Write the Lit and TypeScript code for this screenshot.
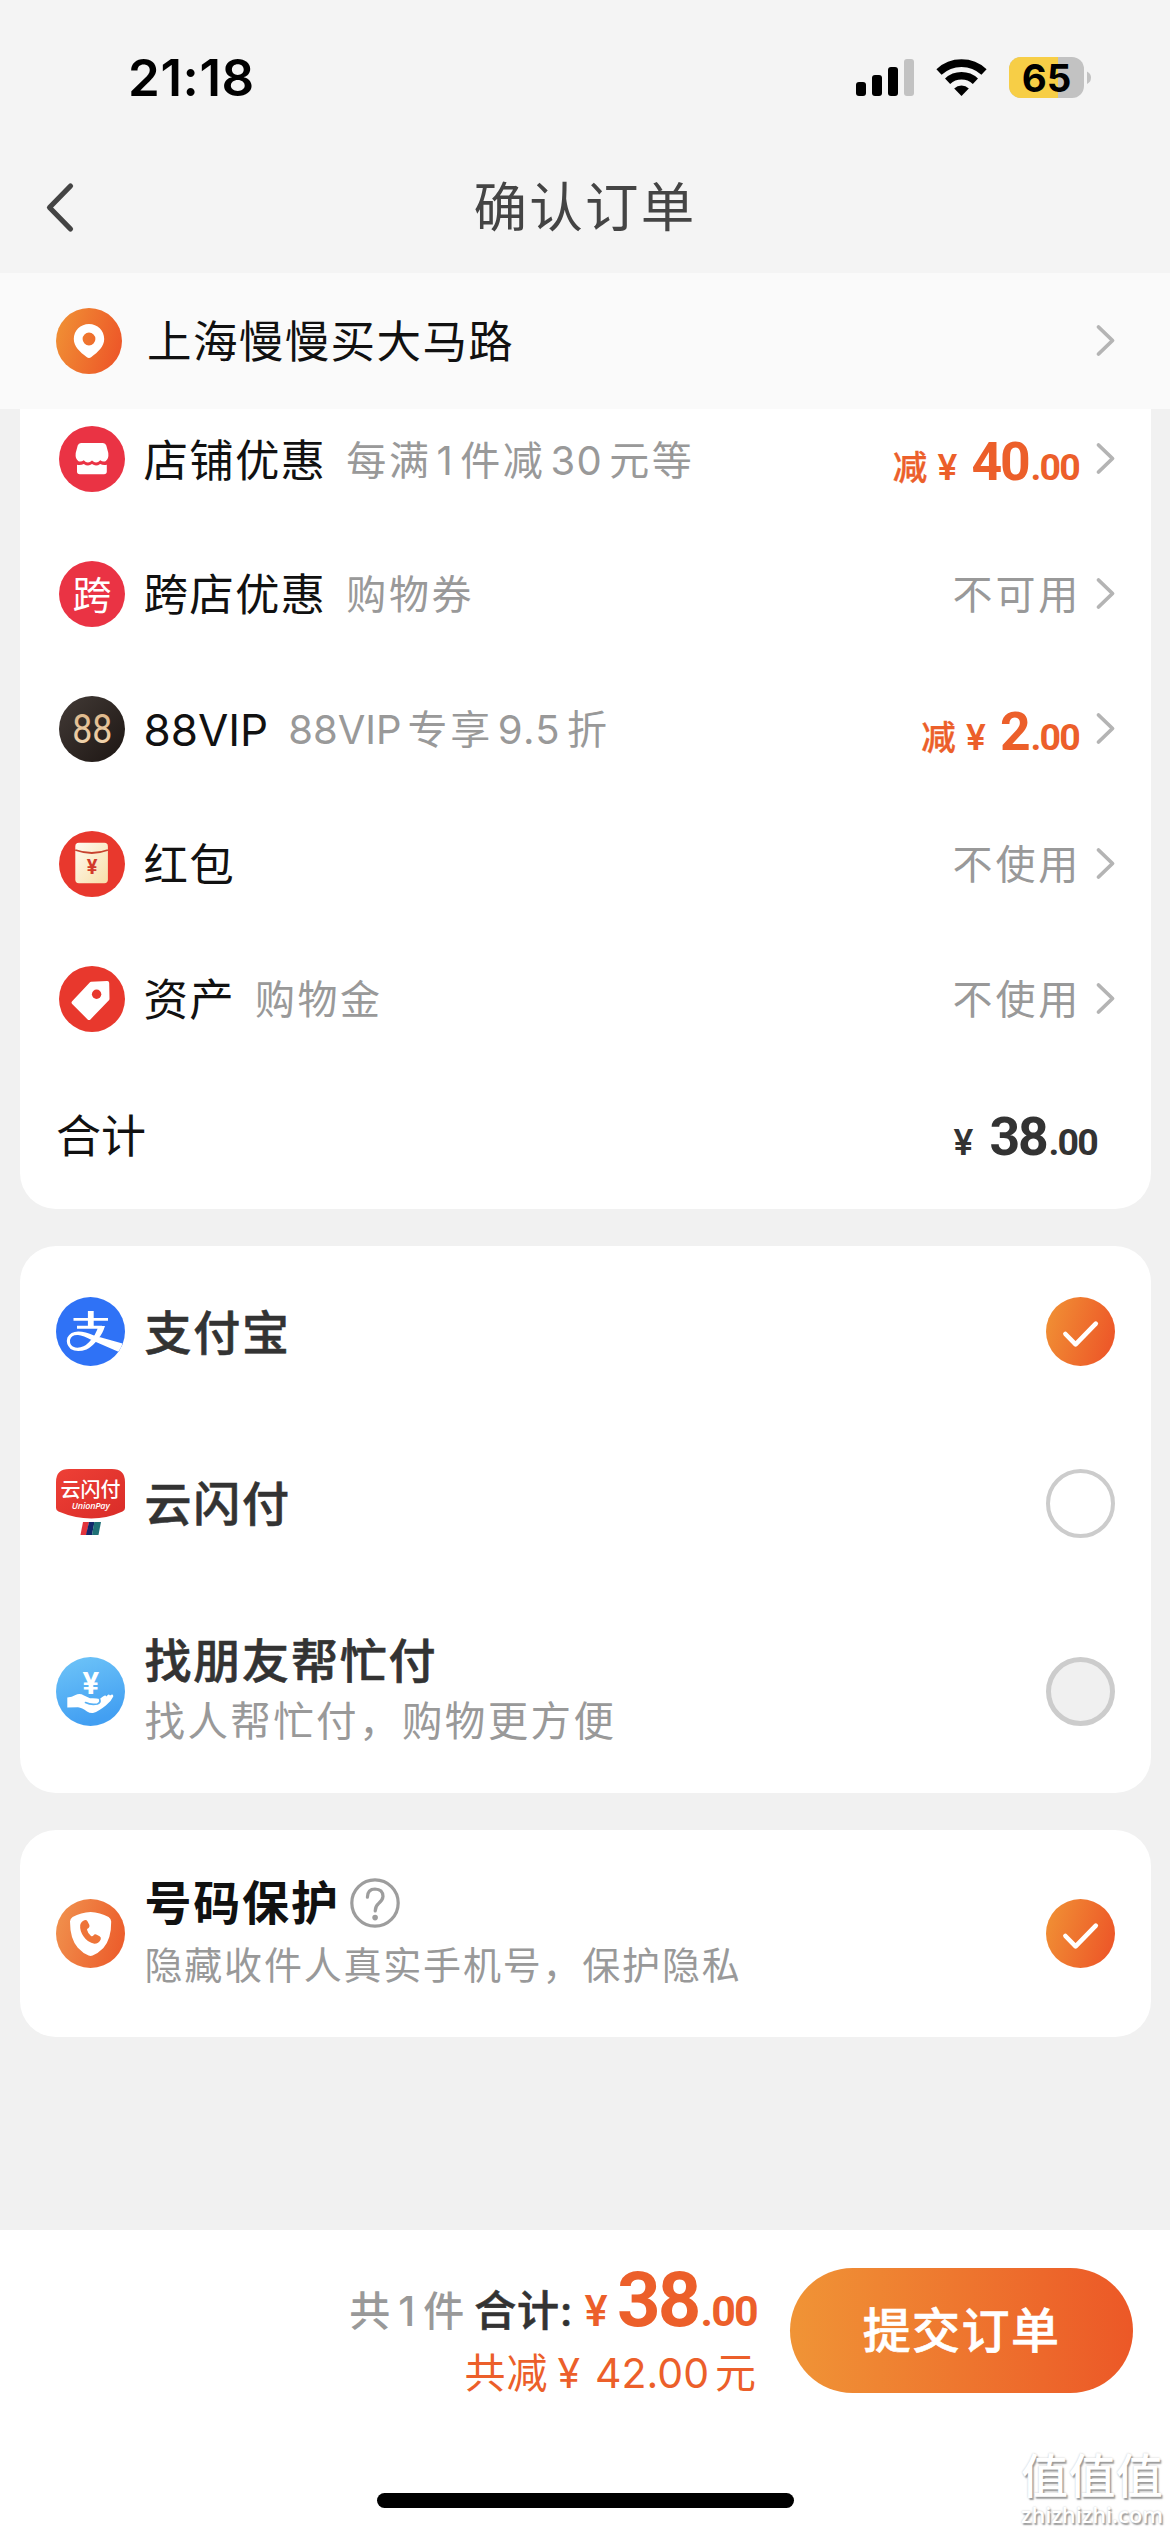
import { LitElement, html, css, svg, nothing, TemplateResult } from "lit";
import { customElement } from "lit/decorators.js";

interface DiscountRow {
  icon: TemplateResult;
  label: string;
  hint?: TemplateResult;
  value?: string;
  off?: [string, string];
}

interface PayRow {
  icon: TemplateResult;
  title: string;
  hint?: string;
  state: "on" | "off" | "disabled";
}

const CJK = "Noto Sans CJK SC";

const orangeFill = (id: string) => svg`
  <linearGradient id=${id} x1="0" y1="0.35" x2="1" y2="0.65">
    <stop offset="0" stop-color="#f08e34"></stop>
    <stop offset="1" stop-color="#ed5628"></stop>
  </linearGradient>`;

const chevron = html`<svg class="chevron" viewBox="0 0 22 36">
  <path d="M3.5 4 L17.5 17.5 L3.5 31" fill="none" stroke="#b4b4b4" stroke-width="3.8" stroke-linecap="round" stroke-linejoin="round"></path>
</svg>`;

const pinIcon = html`<svg class="ico66" viewBox="0 0 66 66">
  <defs>${orangeFill("gpin")}</defs>
  <circle cx="33" cy="33" r="33" fill="url(#gpin)"></circle>
  <path fill="#fff" fill-rule="evenodd" d="M33 16 C24.5 16 17.8 22.6 17.8 31 C17.8 38.5 24 44 30.6 49 Q33 50.8 35.4 49 C42 44 48.2 38.5 48.2 31 C48.2 22.6 41.5 16 33 16 Z M33 24.6 A6.4 6.4 0 1 1 33 37.4 A6.4 6.4 0 1 1 33 24.6 Z"></path>
</svg>`;

const shopIcon = html`<svg class="ico66" viewBox="0 0 66 66">
  <circle cx="33" cy="33" r="33" fill="#ea3344"></circle>
  <path fill="#fff" d="M22 17 H44 Q46.5 17 47.3 19.5 L49.3 27 Q50 33 46.5 35.2 Q43.5 36 41.3 34.2 Q37.3 38.8 33 34.6 Q28.7 38.8 24.7 34.2 Q22.5 36 19.5 35.2 Q16 33 16.7 27 L18.7 19.5 Q19.5 17 22 17 Z"></path>
  <path fill="#fff" d="M18 38.8 Q22 39.6 24.8 37.9 Q29 41 33 38 Q37 41 41.2 37.9 Q44 39.6 47.8 38.8 V45.5 Q47.8 48.3 45 48.3 H20.8 Q18 48.3 18 45.5 Z"></path>
</svg>`;

const crossIcon = html`<svg class="ico66" viewBox="0 0 66 66">
  <circle cx="33" cy="33" r="33" fill="#ea3344"></circle>
  <text x="33" y="47.5" text-anchor="middle" font-family=${CJK} font-size="39" fill="#fff">跨</text>
</svg>`;

const vipIcon = html`<svg class="ico66" viewBox="0 0 66 66">
  <defs>
    <linearGradient id="gvip" x1="0" y1="0" x2="1" y2="1">
      <stop offset="0" stop-color="#423a36"></stop>
      <stop offset="1" stop-color="#1d1613"></stop>
    </linearGradient>
    <linearGradient id="g88" x1="0" y1="0" x2="0" y2="1">
      <stop offset="0" stop-color="#d9b183"></stop>
      <stop offset="1" stop-color="#f6dcb6"></stop>
    </linearGradient>
  </defs>
  <circle cx="33" cy="33" r="33" fill="url(#gvip)"></circle>
  <text x="33.2" y="47" text-anchor="middle" textLength="40" lengthAdjust="spacingAndGlyphs" font-family="Roboto" font-size="41" fill="url(#g88)">88</text>
</svg>`;

const packetIcon = html`<svg class="ico66" viewBox="0 0 66 66">
  <defs>
    <linearGradient id="gpk" x1="0" y1="0" x2="1" y2="1">
      <stop offset="0" stop-color="#fffaf0"></stop>
      <stop offset="1" stop-color="#f8dfa8"></stop>
    </linearGradient>
  </defs>
  <circle cx="33" cy="33" r="33" fill="#e8382d"></circle>
  <rect x="16.3" y="11.8" width="32.6" height="40.4" rx="3.6" fill="url(#gpk)"></rect>
  <path d="M16.3 19 Q33 25 48.9 19" fill="none" stroke="#c8432f" stroke-width="1.8"></path>
  <text x="33" y="43" text-anchor="middle" font-family="Roboto" font-weight="700" font-size="20" fill="#d23a2a">¥</text>
</svg>`;

const tagIcon = html`<svg class="ico66" viewBox="0 0 66 66">
  <circle cx="33" cy="33" r="33" fill="#e8382d"></circle>
  <path fill="#fff" stroke="#fff" stroke-width="4" stroke-linejoin="round" fill-rule="evenodd" d="M32.2 17.8 L48.2 17 L48.5 32.8 L30 52 L14.6 36.6 Z"></path>
  <circle cx="37.6" cy="28.2" r="4.7" fill="#e8382d"></circle>
</svg>`;

const alipayIcon = html`<svg class="ico69" viewBox="0 0 69 69">
  <defs><clipPath id="cali"><circle cx="34.5" cy="34.5" r="34.5"></circle></clipPath></defs>
  <g clip-path="url(#cali)">
    <rect width="69" height="69" fill="#2f72f6"></rect>
    <path fill="none" stroke="#fff" stroke-width="5.8" d="M34.8 14 V30"></path>
    <path fill="none" stroke="#fff" stroke-width="2.9" d="M17.5 22.4 H52"></path>
    <path fill="none" stroke="#fff" stroke-width="2.9" d="M21 30.2 H46"></path>
    <path fill="#fff" d="M42.4 29 H49 Q46.6 36.6 42.8 41 Q37 49.4 30.5 52.4 Q21 56 14.6 52 Q9.4 47 11.4 40.6 Q14.6 34.2 22.6 34.4 Q29 34.6 38 38.4 L66.5 46.4 Q65.8 51 62.4 54.8 L36.5 43.6 Q27 38.4 22 38 Q15.4 37.6 14 43 Q13.4 49 19.4 50.6 Q27 51.6 33.2 45 Q40 38 42.4 29 Z"></path>
  </g>
</svg>`;

const unionIcon = html`<svg class="ico69" viewBox="0 0 69 69">
  <defs>
    <linearGradient id="gun" x1="0" y1="0" x2="1" y2="1">
      <stop offset="0" stop-color="#ee4036"></stop>
      <stop offset="1" stop-color="#d92c28"></stop>
    </linearGradient>
  </defs>
  <path fill="url(#gun)" d="M13 0 H56 Q69 0 69 13 V39 Q69 41.5 66.5 42.4 Q36 56.5 2.5 42.4 Q0 41.5 0 39 V13 Q0 0 13 0 Z"></path>
  <text x="34.5" y="28" text-anchor="middle" textLength="60" font-family=${CJK} font-weight="500" font-size="20" fill="#fff">云闪付</text>
  <text x="34.8" y="40.4" text-anchor="middle" textLength="38" font-family="Open Sans" font-style="italic" font-weight="600" font-size="9" fill="#fff">UnionPay</text>
  <path d="M27 53 H33 L30.5 66 H24.5 Z" fill="#e2343c"></path>
  <path d="M33 53 H38.5 L36 66 H30 Z" fill="#12286c"></path>
  <path d="M38.3 53 H45 L42.5 66 H36 Z" fill="#1f7176"></path>
</svg>`;

const friendIcon = html`<svg class="ico69" viewBox="0 0 69 69">
  <defs>
    <linearGradient id="gfr" x1="0" y1="0" x2="0.3" y2="1">
      <stop offset="0" stop-color="#6fc5f8"></stop>
      <stop offset="1" stop-color="#429ff2"></stop>
    </linearGradient>
  </defs>
  <circle cx="34.5" cy="34.5" r="34.5" fill="url(#gfr)"></circle>
  <text x="34.7" y="36.5" text-anchor="middle" font-family="Roboto" font-weight="700" font-size="31" fill="#fff">¥</text>
  <path fill="#fff" d="M11.3 40.6 Q16 40.4 19.5 38 Q23.5 36 28 38.4 L34 41.3 Q40 41 43.6 42 L47 39.6 Q49.4 37.4 50.6 39.4 Q52.4 36.4 54 38.4 Q57.4 36.4 57.3 39.4 Q55 44.6 49.8 48.4 Q43 54 37 56 Q34 56.4 31 54.4 Q26 50.6 22 50.2 L11.3 50.4 Z"></path>
  <path fill="none" stroke="#57b0f5" stroke-width="1.7" stroke-linecap="round" d="M29.5 45.6 Q35 48.2 41.4 47 Q45 45.6 43.6 42"></path>
</svg>`;

const shieldIcon = html`<svg class="ico69" viewBox="0 0 69 69">
  <defs>
    <linearGradient id="gsh" x1="0" y1="0.35" x2="1" y2="0.65">
      <stop offset="0" stop-color="#f08f4c"></stop>
      <stop offset="1" stop-color="#ec5c2b"></stop>
    </linearGradient>
  </defs>
  <circle cx="34.5" cy="34.5" r="34.5" fill="url(#gsh)"></circle>
  <path fill="#fff" d="M34.6 13 Q44 13.6 52.6 18 Q55 19.6 55.2 22.6 Q55.4 40 47.4 49 Q42 54.4 36.6 56.6 Q34.6 57.4 32.6 56.6 Q27 54.4 21.8 48.8 Q14 40 14 22.6 Q14.2 19.6 16.6 18 Q25 13.6 34.6 13 Z"></path>
  <path fill="#ee7438" d="M28.4 21.2 Q25.2 22.2 24.2 26 Q23.6 31.6 27.6 37.6 Q31.8 43.8 38.4 44.8 Q42.6 44.8 44.6 40.8 Q45.6 38.6 43.6 37.2 L40.2 35.4 Q38.4 34.8 37.4 36.6 Q36.4 37.8 35 37 Q32 34.8 31 30.8 Q31 29.6 32.6 29 Q33.8 28.2 33.4 26 L31.6 22.4 Q30.4 20.6 28.4 21.2 Z"></path>
</svg>`;

const helpIcon = html`<svg class="help" viewBox="0 0 50 50">
  <circle cx="25" cy="25" r="23.2" fill="none" stroke="#9d9d9d" stroke-width="3.2"></circle>
  <path d="M17.4 19.2 Q17.6 11 25 11 Q32.8 11.2 33 18.4 Q32.8 22 28.6 25.4 Q25.2 28.2 25.2 33" fill="none" stroke="#9d9d9d" stroke-width="3.2" stroke-linecap="round"></path>
  <circle cx="25.1" cy="39.6" r="2.8" fill="#9d9d9d"></circle>
</svg>`;

const check = (state: string) =>
  state === "on"
    ? html`<svg class="ico69" viewBox="0 0 69 69">
        <defs>${orangeFill("gck")}</defs>
        <circle cx="34.5" cy="34.5" r="34.5" fill="url(#gck)"></circle>
        <path d="M19.4 37 L29.6 47.4 L49.8 26.6" fill="none" stroke="#fff" stroke-width="4.6" stroke-linecap="round" stroke-linejoin="round"></path>
      </svg>`
    : html`<span class="ring ${state}"></span>`;

@customElement("app-root")
export class AppRoot extends LitElement {
  static styles = css`
    :host {
      display: flex;
      flex-direction: column;
      width: 1170px;
      height: 2532px;
      overflow: hidden;
      background: #f1f1f1;
      font-family: Inter, "Noto Sans CJK SC", sans-serif;
      color: #111;
      position: relative;
    }
    * { box-sizing: border-box; }
    svg { display: block; flex: none; }
    .ico66 { width: 66px; height: 66px; }
    .ico69 { width: 69px; height: 69px; }
    .chevron { width: 22px; height: 36px; }

    .top { height: 273px; background: #f4f4f4; display: flex; flex-direction: column; flex: none; }
    .status { height: 156px; display: flex; align-items: center; padding: 0 78px 0 128px; flex: none; }
    .clock { flex: 1; font-size: 51px; font-weight: 600; line-height: 60px; color: #000; letter-spacing: 0.6px; }
    .signals { width: 237px; height: 44px; }
    .nav { height: 102px; display: grid; grid-template-columns: 200px 1fr 200px; align-items: center; }
    .back { width: 34px; height: 52px; margin-left: 42px; }
    .title { text-align: center; font-size: 53.5px; line-height: 60px; letter-spacing: 2.2px; color: #444; padding-top: 2px; }

    .address { height: 136px; background: #fafafa; display: flex; align-items: center; padding: 0 53px 0 56px; flex: none; }
    .address-name { flex: 1; padding: 2px 0 0 25px; font-size: 44.5px; letter-spacing: 1.4px; line-height: 60px; }

    .card { background: #fff; margin: 0 19px 0 20px; border-radius: 36px; flex: none; }
    .card.bill { border-radius: 0 0 36px 36px; height: 800px; padding: 0 34px 0 39px; margin-bottom: 37px; overflow: hidden; }
    .row { height: 135px; display: flex; align-items: center; }
    .row:first-child { height: 117px; padding-bottom: 17px; }
    .label { padding: 3px 0 0 18.5px; font-size: 44.5px; letter-spacing: 1.2px; line-height: 60px; white-space: nowrap; }
    .label.latin { font-size: 44px; letter-spacing: 0; }
    .hint { flex: 1; padding: 3px 0 0 20px; font-size: 40px; letter-spacing: 2.6px; line-height: 60px; color: #999; white-space: nowrap; }
    .num { letter-spacing: 1.4px; margin-left: 5px; margin-right: 6px; }
    .num.lead { margin-left: 0; letter-spacing: 0; }
    .value { font-size: 40px; letter-spacing: 2.8px; color: #999; line-height: 60px; margin-right: 14px; padding-top: 2px; white-space: nowrap; }

    .price { font-family: Roboto, "Noto Sans CJK SC", sans-serif; font-weight: 700; line-height: 60px; white-space: nowrap; display: flex; align-items: baseline; }
    .price.off { color: #ec5f2a; margin-right: 16px; padding-top: 12px; }
    .cut { font-size: 34.5px; font-weight: 500; margin-right: 10px; -webkit-text-stroke: 0.4px currentColor; }
    .yen { font-family: Inter, sans-serif; font-weight: 600; font-size: 36px; margin-right: 14px; }
    .int { font-size: 53.5px; letter-spacing: -2.2px; }
    .dec { font-size: 37.5px; letter-spacing: -1.8px; margin-left: 2px; }
    .total { height: 140px; display: flex; align-items: center; justify-content: space-between; padding-right: 20px; }
    .total .label { padding: 2px 0 0; margin-left: -3px; font-size: 45px; letter-spacing: 0; }
    .total .price { color: #333; padding-top: 7px; }
    .total .yen { margin-right: 16px; }

    .card.pay { height: 547px; margin-bottom: 37px; display: grid; grid-template-rows: 171px 172px 204px; }
    .card.guard { height: 207px; display: grid; }
    .option { display: flex; align-items: center; padding: 0 36px; }
    .texts { flex: 1; padding: 2px 0 0 19.5px; display: flex; flex-direction: column; }
    .name { font-size: 47px; letter-spacing: 1.8px; font-weight: 500; line-height: 60px; color: #333; display: flex; align-items: center; -webkit-text-stroke: 0.6px currentColor; }
    .desc { font-size: 40.5px; letter-spacing: 2.4px; line-height: 62px; color: #999; white-space: nowrap; }
    .guard .name { color: #111; font-weight: 700; gap: 10px; -webkit-text-stroke: 0; }
    .guard .desc { font-size: 38px; letter-spacing: 1.8px; line-height: 64px; }
    .help { width: 50px; height: 50px; }
    .ring { width: 69px; height: 69px; border-radius: 50%; border: 4px solid #ccc; flex: none; }
    .ring.disabled { background: #f0f0f0; border-width: 5px; }

    .footer { margin-top: auto; height: 302px; background: #fff; flex: none; display: flex; flex-direction: column; }
    .submit { display: flex; padding: 38px 37px 0 0; justify-content: flex-end; gap: 33px; }
    .sums { display: flex; flex-direction: column; align-items: flex-end; padding-top: 2px; }
    .sum-line { display: flex; align-items: baseline; height: 78px; line-height: 60px; white-space: nowrap; }
    .count { font-size: 41px; color: #999; font-weight: 500; margin-right: 10px; }
    .count .num { margin: 0 8px; letter-spacing: 0; }
    .sum-label { font-size: 42px; font-weight: 500; color: #333; letter-spacing: 0.8px; margin-right: 11px; -webkit-text-stroke: 0.6px currentColor; }
    .sum-line .price { color: #ec5f2a; }
    .sum-line .yen { font-size: 42px; margin-right: 9px; }
    .sum-line .int { font-size: 76px; letter-spacing: -2.8px; }
    .sum-line .dec { font-size: 43px; letter-spacing: -1.8px; }
    .saved { display: flex; font-size: 41px; letter-spacing: 1px; line-height: 50px; color: #ec5f2a; white-space: nowrap; }
    .saved-yen { margin: 0 14px 0 9px; }
    .saved-num { margin-right: 6px; letter-spacing: 0; }
    .btn { width: 343px; height: 125px; border-radius: 63px; border: 0; padding: 1px 0 0; background: linear-gradient(90deg, #f09436, #ec5827); color: #fff; font: 500 48px/60px Inter, "Noto Sans CJK SC", sans-serif; letter-spacing: 1.4px; -webkit-text-stroke: 0.6px currentColor; }
    .home { width: 417px; height: 15px; border-radius: 8px; background: #000; margin: auto auto 24px 377px; }

    .mark { position: absolute; right: 7px; bottom: 5px; display: flex; flex-direction: column; align-items: flex-end; gap: 3px; color: #fff; text-shadow: 1.5px 1.5px 1.5px #999, 0 0 2px #c4c4c4; }
    .mark-name { font-size: 47px; line-height: 48px; letter-spacing: 0.3px; font-weight: 500; }
    .mark-site { font: 600 21.8px/24px "Open Sans", sans-serif; }
  `;

  private rows: DiscountRow[] = [
    {
      icon: shopIcon,
      label: "店铺优惠",
      hint: html`每满<span class="num">1</span>件减<span class="num">30</span>元等`,
      off: ["40", "00"],
    },
    { icon: crossIcon, label: "跨店优惠", hint: html`购物券`, value: "不可用" },
    {
      icon: vipIcon,
      label: "88VIP",
      hint: html`<span class="num lead">88VIP</span>专享<span class="num">9.5</span>折`,
      off: ["2", "00"],
    },
    { icon: packetIcon, label: "红包", value: "不使用" },
    { icon: tagIcon, label: "资产", hint: html`购物金`, value: "不使用" },
  ];

  private payments: PayRow[] = [
    { icon: alipayIcon, title: "支付宝", state: "on" },
    { icon: unionIcon, title: "云闪付", state: "off" },
    { icon: friendIcon, title: "找朋友帮忙付", hint: "找人帮忙付，购物更方便", state: "disabled" },
  ];

  private statusIcons() {
    return html`<svg class="signals" viewBox="0 0 237 44">
      <rect x="1" y="26" width="10" height="14" rx="3"></rect>
      <rect x="17" y="19" width="10" height="21" rx="3"></rect>
      <rect x="33" y="11" width="10" height="29" rx="3"></rect>
      <rect x="49" y="3" width="10" height="37" rx="3" fill="#c2c2c2"></rect>
      <g fill="none" stroke="#000">
        <path d="M84 16 A33 33 0 0 1 129 16" stroke-width="7.6"></path>
        <path d="M92.6 25.2 A20.5 20.5 0 0 1 120.4 25.2" stroke-width="7.6"></path>
      </g>
      <path d="M106.5 40 L99.2 32.4 A10.5 10.5 0 0 1 113.8 32.4 Z"></path>
      <clipPath id="cbat"><rect x="154" y="1" width="75" height="41" rx="12"></rect></clipPath>
      <g clip-path="url(#cbat)">
        <rect x="154" y="1" width="75" height="41" fill="#c2c2c2"></rect>
        <rect x="154" y="1" width="49" height="41" fill="#f7ce46"></rect>
      </g>
      <path d="M232 15.5 Q236 17.5 236 21.5 Q236 26 232 28 Z" fill="#c2c2c2"></path>
      <text x="191.5" y="35.5" text-anchor="middle" font-family="Inter" font-weight="700" font-size="38.5">65</text>
    </svg>`;
  }

  private price(cls: string, int: string, dec: string, cut = false) {
    return html`<div class="price ${cls}">
      ${cut ? html`<span class="cut">减</span>` : nothing}<span class="yen">¥</span><span class="int">${int}</span><span class="dec">.${dec}</span>
    </div>`;
  }

  render() {
    return html`
      <header class="top">
        <div class="status"><span class="clock">21:18</span>${this.statusIcons()}</div>
        <div class="nav">
          <svg class="back" viewBox="0 0 34 52">
            <path d="M28.5 5 L7.5 26.5 L28.5 48" fill="none" stroke="#444" stroke-width="5.2" stroke-linecap="round" stroke-linejoin="round"></path>
          </svg>
          <div class="title">确认订单</div>
        </div>
      </header>
      <div class="address">${pinIcon}<span class="address-name">上海慢慢买大马路</span>${chevron}</div>

      <section class="card bill">
        ${this.rows.map(
          (r) => html`<div class="row">
            ${r.icon}<span class="label ${r.label === "88VIP" ? "latin" : ""}">${r.label}</span>
            <span class="hint">${r.hint ?? nothing}</span>
            ${r.off ? this.price("off", r.off[0], r.off[1], true) : html`<span class="value">${r.value}</span>`}${chevron}
          </div>`
        )}
        <div class="total"><span class="label">合计</span>${this.price("", "38", "00")}</div>
      </section>

      <section class="card pay">
        ${this.payments.map(
          (p) => html`<div class="option">
            ${p.icon}
            <div class="texts">
              <span class="name">${p.title}</span>
              ${p.hint ? html`<span class="desc">${p.hint}</span>` : nothing}
            </div>
            ${check(p.state)}
          </div>`
        )}
      </section>

      <section class="card guard">
        <div class="option">
          ${shieldIcon}
          <div class="texts">
            <span class="name">号码保护${helpIcon}</span>
            <span class="desc">隐藏收件人真实手机号，保护隐私</span>
          </div>
          ${check("on")}
        </div>
      </section>

      <footer class="footer">
        <div class="submit">
          <div class="sums">
            <div class="sum-line">
              <span class="count">共<span class="num">1</span>件</span><span class="sum-label">合计:</span>${this.price("", "38", "00")}
            </div>
            <div class="saved">共减<span class="saved-yen">¥</span><span class="saved-num">42.00</span>元</div>
          </div>
          <button class="btn">提交订单</button>
        </div>
        <div class="home"></div>
      </footer>
      <div class="mark">
        <div class="mark-name">值值值</div>
        <div class="mark-site">zhizhizhi.com</div>
      </div>
    `;
  }
}
